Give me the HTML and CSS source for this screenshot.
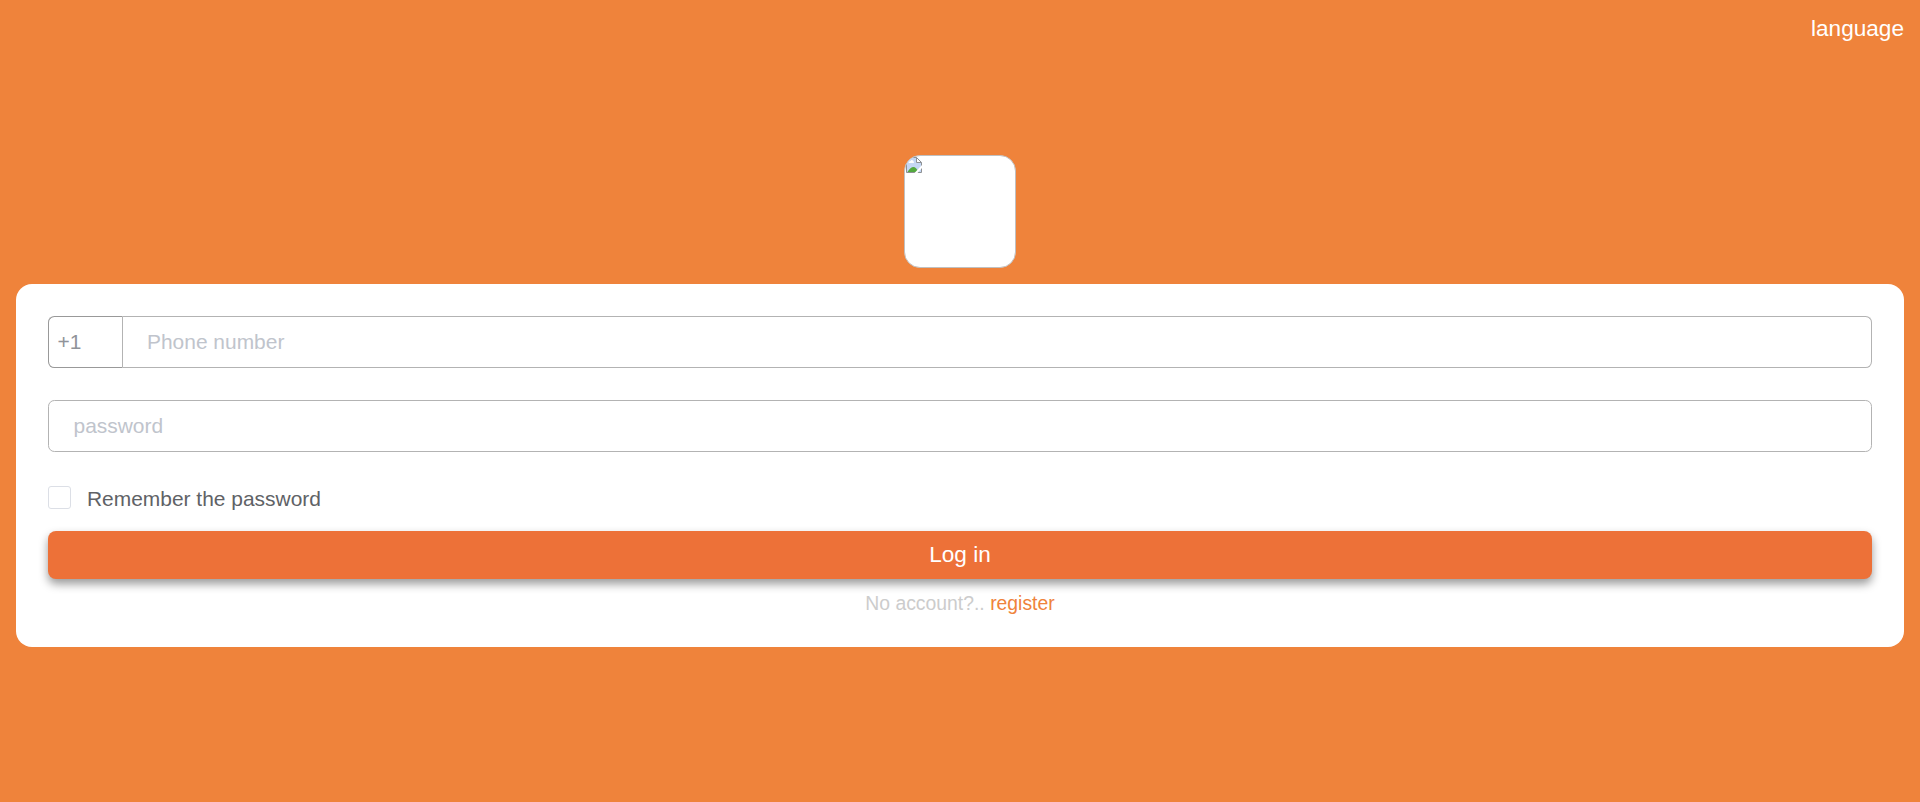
FILE: index.html
```html
<!DOCTYPE html>
<html lang="en">
<head>
<meta charset="utf-8">
<title>Log in</title>
<link rel="stylesheet" href="styles.css">
</head>
<body>
<main class="page">
  <header class="topbar"><a class="language">language</a></header>
  <div class="logo">
    <svg class="logo-icon" width="16" height="16" viewBox="0 0 16 16">
      <path d="M.5.500H11L15.500 5V15.500H.5z" fill="#c5d7f5"/>
      <path d="M2.500 6q0-1.500 2-2 1-1.500 2.500-.5 1 1 1 2.500z" fill="#fff"/>
      <path d="M1.500 15q3-5 6-5 2.500 0 5 5z" fill="#53a93f"/>
      <path d="M10.500.5v5h5z" fill="#fff"/>
      <path d="M.5 15.500V.5h10l5 5v10zM10.500.5v5h5" fill="none" stroke="#8e9194"/>
      <path d="M8.500 16 16 8v3L11.500 16z" fill="#fff"/>
    </svg>
  </div>
  <form class="card">
    <div class="phone">
      <div class="code">+1</div>
      <div class="field phone-field">Phone number</div>
    </div>
    <div class="field">password</div>
    <label class="remember"><span class="box"></span><span class="remember-text">Remember the password</span></label>
    <button class="login" type="button">Log in</button>
    <p class="signup">No account?.. <a class="register">register</a></p>
  </form>
</main>
</body>
</html>
```
FILE: styles.css
```css
* { box-sizing: border-box; }
body { margin: 0; font-family: "Liberation Sans", Arial, sans-serif; background: #ef833b; }
.page { display: flex; flex-direction: column; height: 802px; padding: 0 16px; }
.topbar { display: flex; justify-content: flex-end; height: 155px; padding-top: 16px; }
.language { font-size: 22.6px; line-height: 25px; color: #fff; }
.logo { width: 112px; height: 113px; margin: 0 auto 16px; padding: 1px; border: 1px solid #c0c0c0; border-radius: 16px; background: #fff; overflow: hidden; }
.logo-icon { display: block; }
.card { display: flex; flex-direction: column; height: 363px; padding: 32px; border-radius: 16px; background: #fff; }
.phone { display: flex; margin-bottom: 32px; }
.code { width: 75px; height: 52px; padding-left: 8.500px; border: 1px solid #999; border-right-color: #b3b3b3; border-radius: 6.4px 0 0 6.4px; font-size: 20.95px; line-height: 50px; color: #909399; }
.field { height: 52px; padding-left: 24.500px; border: 1px solid #b3b3b3; border-radius: 6.4px; font-size: 20.95px; line-height: 50px; color: #c0c4cc; }
.phone-field { flex: 1; padding-left: 24px; border-left: 0; border-radius: 0 6.4px 6.4px 0; }
.remember { display: flex; height: 45px; margin: 34px 0 0; }
.box { width: 23px; height: 23px; border: 1px solid #dcdfe6; border-radius: 3px; }
.remember-text { margin-left: 16px; font-size: 20.95px; line-height: 26px; color: #606266; }
.login { flex: none; height: 48px; padding: 0; border: 0; border-radius: 8px; background: #ed7138; box-shadow: 0 5px 10px rgba(0, 0, 0, .4); font: 22.6px/48px "Liberation Sans", Arial, sans-serif; color: #fff; }
.signup { margin: 13px 0 0; font-size: 19.36px; line-height: 23px; text-align: center; color: #ccc; }
.register { color: #ef833b; }
```
